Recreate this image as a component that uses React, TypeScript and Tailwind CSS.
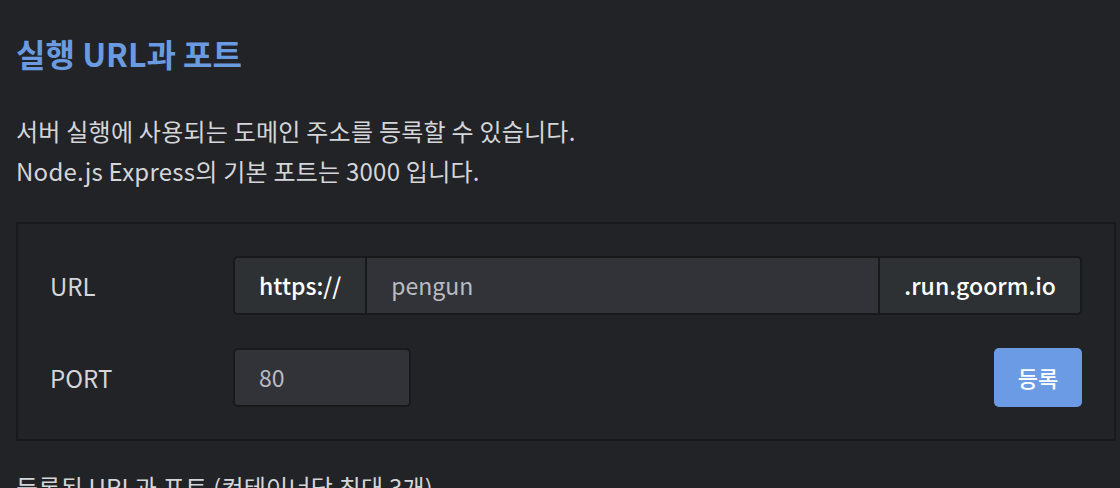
import React from 'react';

const App: React.FC = () => {
  return (
    <div
      className="min-h-screen w-[1120px] h-[488px] overflow-hidden bg-[#222326] pl-4 pr-1"
      style={{ fontFamily: '"Noto Sans CJK KR", "Noto Sans", sans-serif' }}
    >
      {/* Header */}
      <h2 className="pt-[33px] text-[32px] leading-[40px] font-semibold text-[#6a9be0]">실행 URL과 포트</h2>

      <div className="mt-[38px] text-[24px] leading-[40px] tracking-[0.01em] text-[#d4d6da]">
        <p>서버 실행에 사용되는 도메인 주소를 등록할 수 있습니다.</p>
        <p>Node.js Express의 기본 포트는 3000 입니다.</p>
      </div>

      {/* Form box */}
      <div className="mt-[31px] border-2 border-[#18191b] p-8">
        <div className="flex flex-col gap-[33px]">
          <div className="flex items-center h-[59px]">
            <label className="w-[183px] text-[24px] text-[#d4d6da]">URL</label>
            <div className="flex flex-1 h-full rounded-[5px] border-2 border-[#18191b] overflow-hidden">
              <div className="flex items-center px-6 bg-[#2e3134] text-[23px] font-medium text-white border-r-2 border-[#18191b]">
                https://
              </div>
              <div className="flex flex-1 items-center px-6 bg-[#323338] text-[23px] text-[#b9bcc3]">pengun</div>
              <div className="flex items-center px-6 bg-[#2e3134] text-[23px] font-medium text-white border-l-2 border-[#18191b]">
                .run.goorm.io
              </div>
            </div>
          </div>
          <div className="flex items-center h-[59px]">
            <label className="w-[183px] text-[24px] text-[#d4d6da]">PORT</label>
            <div className="flex items-center w-[178px] h-full px-6 rounded-[5px] border-2 border-[#18191b] bg-[#323338] text-[23px] text-[#b9bcc3]">
              80
            </div>
            <button className="ml-auto h-full w-[88px] rounded-[5px] bg-[#6b9be4] text-[22px] font-medium text-white">등록</button>
          </div>
        </div>
      </div>

      <p className="mt-[26px] text-[24px] leading-[40px] tracking-[0.01em] text-[#d4d6da]">등록된 URL과 포트 (컨테이너당 최대 3개)</p>
    </div>
  );
};

export default App;
